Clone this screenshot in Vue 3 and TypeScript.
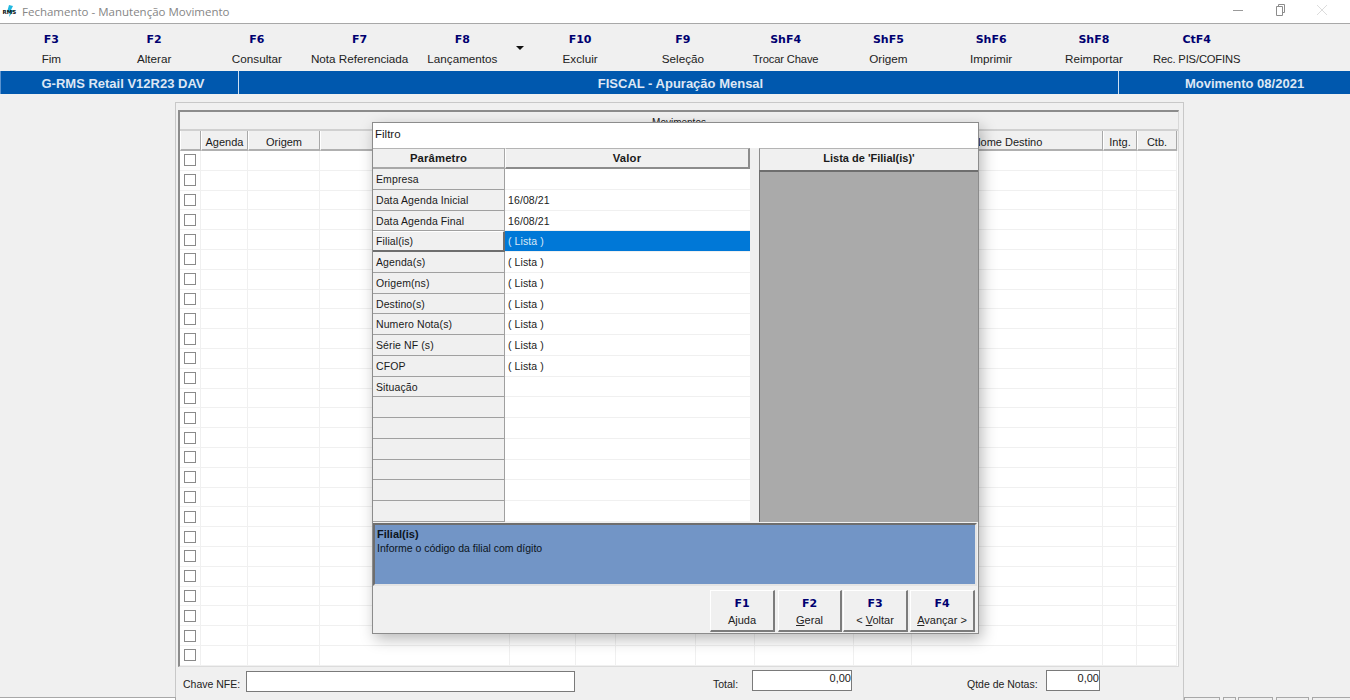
<script setup lang="ts">
interface Tool { key: string; label: string; tight?: boolean }
const toolsLeft: Tool[] = [
  { key: 'F3', label: 'Fim' },
  { key: 'F2', label: 'Alterar' },
  { key: 'F6', label: 'Consultar' },
  { key: 'F7', label: 'Nota Referenciada' },
  { key: 'F8', label: 'Lançamentos' },
]
const toolsRight: Tool[] = [
  { key: 'F10', label: 'Excluir' },
  { key: 'F9', label: 'Seleção' },
  { key: 'ShF4', label: 'Trocar Chave', tight: true },
  { key: 'ShF5', label: 'Origem' },
  { key: 'ShF6', label: 'Imprimir' },
  { key: 'ShF8', label: 'Reimportar' },
  { key: 'CtF4', label: 'Rec. PIS/COFINS', tight: true },
]
const columns = [
  { w: 21, t: '' }, { w: 47, t: 'Agenda' }, { w: 72, t: 'Origem' }, { w: 190, t: '' },
  { w: 66, t: '' }, { w: 40, t: '' }, { w: 80, t: '' }, { w: 59, t: '' }, { w: 99, t: '' },
  { w: 58, t: '' }, { w: 191, t: 'Nome Destino' }, { w: 34, t: 'Intg.' }, { w: 40, t: 'Ctb.' },
]
const rows = Array.from({ length: 26 }, (_, i) => i)
const params = [
  { p: 'Empresa', v: '' },
  { p: 'Data Agenda Inicial', v: '16/08/21' },
  { p: 'Data Agenda Final', v: '16/08/21' },
  { p: 'Filial(is)', v: '( Lista )', active: true },
  { p: 'Agenda(s)', v: '( Lista )' },
  { p: 'Origem(ns)', v: '( Lista )' },
  { p: 'Destino(s)', v: '( Lista )' },
  { p: 'Numero Nota(s)', v: '( Lista )' },
  { p: 'Série NF (s)', v: '( Lista )' },
  { p: 'CFOP', v: '( Lista )' },
  { p: 'Situação', v: '' },
  { p: '', v: '' }, { p: '', v: '' }, { p: '', v: '' },
  { p: '', v: '' }, { p: '', v: '' }, { p: '', v: '' },
]
</script>

<template>
  <div class="app">
    <header class="titlebar">
      <svg class="logo" width="16" height="12" viewBox="0 0 16 12">
        <path d="M7 0 L11 1 L9 5 L12 5 L7 12 L8 7 L5 7 Z" fill="#22b8e0" />
        <text x="0.5" y="8.5" class="logo-text">RMS</text>
      </svg>
      <span class="title">Fechamento - Manutenção Movimento</span>
      <div class="winbtns">
        <svg width="14" height="14" viewBox="0 0 14 14"><path d="M2 7.5H12" stroke="#9a9a9a" /></svg>
        <svg width="14" height="14" viewBox="0 0 14 14"><path d="M5.5 3.5V1.5H11.5V9.5H9.5M3.5 3.5H9.5V12.5H3.5Z" fill="none" stroke="#8c8c8c" /></svg>
        <svg width="14" height="14" viewBox="0 0 14 14"><path d="M2 2L12 12M12 2L2 12" stroke="#dcdcdc" /></svg>
      </div>
    </header>

    <nav class="toolbar">
      <div v-for="t in toolsLeft" :key="t.key" class="tool">
        <b>{{ t.key }}</b><span>{{ t.label }}</span>
      </div>
      <div class="drop"><i class="arrow"></i></div>
      <div v-for="t in toolsRight" :key="t.key" class="tool" :class="{ tight: t.tight }">
        <b>{{ t.key }}</b><span>{{ t.label }}</span>
      </div>
    </nav>

    <div class="banner">
      <div class="bn bn-a">G-RMS Retail V12R23 DAV</div>
      <div class="bn bn-b">FISCAL - Apuração Mensal</div>
      <div class="bn bn-c">Movimento 08/2021</div>
    </div>

    <main class="work">
      <section class="panel">
        <div class="table">
          <div class="tbl-title">Movimentos</div>
          <div class="tr th">
            <div v-for="(c, i) in columns" :key="i" class="hc" :style="{ width: c.w + 'px' }">{{ c.t }}</div>
          </div>
          <div class="tbody">
            <div v-for="r in rows" :key="r" class="tr">
              <div v-for="(c, i) in columns" :key="i" class="td" :style="{ width: c.w + 'px' }">
                <i v-if="i === 0" class="check"></i>
              </div>
            </div>
          </div>
        </div>
        <div class="foot">
          <label class="l1">Chave NFE:</label>
          <div class="inp i1"></div>
          <label class="l2">Total:</label>
          <div class="inp i2">0,00</div>
          <label class="l3">Qtde de Notas:</label>
          <div class="inp i3">0,00</div>
        </div>
      </section>
      <div class="status">
        <i class="s0"></i><i class="s1"></i><i class="s2"></i><i class="s3"></i><i class="s4"></i><i class="s5"></i>
      </div>
    </main>

    <div class="dialog">
      <div class="dlg-title">Filtro</div>
      <div class="dlg-body">
        <div class="grid">
          <div class="grid-head">
            <div class="gh gh-p">Parâmetro</div>
            <div class="gh gh-v">Valor</div>
          </div>
          <div v-for="(r, i) in params" :key="i" class="grow">
            <div class="gp" :class="{ on: r.active }">{{ r.p }}</div>
            <div class="gv" :class="{ on: r.active }">{{ r.v }}</div>
          </div>
        </div>
        <div class="list">
          <div class="list-head">Lista de 'Filial(is)'</div>
          <div class="list-body"></div>
        </div>
      </div>
      <div class="help">
        <b>Filial(is)</b>
        <span>Informe o código da filial com dígito</span>
      </div>
      <div class="actions">
        <button class="btn b1"><b>F1</b><span>Ajuda</span></button>
        <button class="btn b2"><b>F2</b><span><u>G</u>eral</span></button>
        <button class="btn b3"><b>F3</b><span>&lt; <u>V</u>oltar</span></button>
        <button class="btn b4"><b>F4</b><span><u>A</u>vançar &gt;</span></button>
      </div>
    </div>
  </div>
</template>

<style>
html, body { margin: 0; background: #f0f0f0; overflow: hidden; }
</style>

<style scoped>
.app {
  position: relative;
  width: 1350px;
  height: 700px;
  overflow: hidden;
  background: #f0f0f0;
  font-family: "Liberation Sans", Arial, sans-serif;
  font-size: 12px;
  color: #1a1a1a;
  display: flex;
  flex-direction: column;
}
.titlebar {
  height: 23px;
  background: #fff;
  border-bottom: 1px solid #a8a8a8;
  display: flex;
  align-items: center;
  padding-left: 2px;
  flex: none;
}
.logo { margin-right: 4px; margin-top: -1px; }
.logo-text { font-family: "DejaVu Sans", sans-serif; font-weight: 700; font-size: 5.5px; fill: #111; }
.title { color: #868686; font-family: "Open Sans", sans-serif; font-size: 11.5px; margin-top: -1px; }
.winbtns { margin-left: auto; display: flex; gap: 28px; padding-right: 21px; margin-top: -3px; }

.toolbar { height: 47px; display: flex; flex: none; background: #f0f0f0; }
.tool {
  width: 102.75px;
  display: flex;
  flex-direction: column;
  align-items: center;
  padding-top: 9px;
}
.tool b, .btn b {
  font-family: "DejaVu Sans", sans-serif;
  font-size: 11px;
  line-height: 14px;
  color: #000070;
  font-weight: 700;
}
.tool span { font-size: 11.7px; line-height: 14px; margin-top: 5px; color: #222; white-space: nowrap; }
.tool.tight span { font-size: 11.2px; letter-spacing: -.15px; }
.drop { width: 15px; position: relative; }
.arrow {
  position: absolute; left: 0; top: 22px;
  border-left: 4px solid transparent; border-right: 4px solid transparent; border-top: 4px solid #111;
  margin-left: 2px;
}

.banner { height: 23px; display: flex; background: #0058ae; flex: none; color: #dde7f4; font-weight: 700; font-size: 13px; }
.bn { display: flex; align-items: center; justify-content: center; border-right: 1px solid #cfe0f2; box-sizing: border-box; padding-top: 1px; }
.bn-a { width: 239px; padding-left: 7px; border-left: 1px solid #5c93cf; }
.bn-b { width: 880px; padding-left: 4px; }
.bn-c { flex: 1; border-right: 0; padding-left: 20px; }

.work { flex: 1; position: relative; min-height: 0; padding-left: 175px; padding-top: 8px; }
.panel {
  width: 1009px;
  height: 606px;
  box-sizing: border-box;
  background: #f0f0f0;
  border: 1px solid #c8c8c8;
  border-bottom: 0;
  padding: 7px 4px 0 2px;
  position: relative;
}
.table {
  width: 1001px;
  border-top: 2px solid #8c8c8c;
  border-left: 2px solid #8c8c8c;
  border-right: 1px solid #d8d8d8;
  border-bottom: 1px solid #dcdcdc;
  box-sizing: border-box;
  background: #fff;
}
.tbl-title {
  height: 19px;
  box-sizing: border-box;
  background: #f0f0f0;
  border-bottom: 2px solid #d0d0d0;
  text-align: center;
  font-size: 10px;
  line-height: 21px;
}
.tr { display: flex; height: 19.8px; }
.tr .td { flex: none; box-sizing: border-box; border-right: 1px solid #f0f0f0; border-bottom: 1px solid #f0f0f0; display: flex; align-items: center; justify-content: center; }
.tr.th { height: 20px; background: #f0f0f0; }
.hc {
  flex: none;
  box-sizing: border-box;
  border-right: 1px solid #a8a8a8;
  border-bottom: 2px solid #b0b0b0;
  border-left: 1px solid #fff;
  text-align: center;
  font-size: 11px;
  line-height: 20px;
  padding-top: 1px;
  white-space: nowrap;
}
.check { width: 10px; height: 10px; background: #fff; border: 1px solid #8a8a8a; display: block; }

.foot { position: relative; height: 40px; font-size: 10.5px; }
.foot label { position: absolute; top: 10px; line-height: 14px; color: #222; white-space: nowrap; }
.l1 { left: 5px; }
.l2 { left: 535px; }
.l3 { left: 789px; }
.inp {
  position: absolute;
  box-sizing: border-box;
  height: 21px;
  background: #fff;
  border: 1px solid #7a7a7a;
  text-align: right;
  font-size: 11px;
  line-height: 15px;
}
.i1 { left: 68px; width: 329px; top: 4px; }
.i2 { left: 574px; width: 100px; top: 3px; }
.i3 { left: 868px; width: 54px; top: 3px; }

.status { position: absolute; left: 0; right: 0; bottom: 0; height: 3px; }
.status i { position: absolute; top: 0; height: 6px; border: 1px solid #a8a8a8; box-sizing: border-box; }
.s0 { left: -2px; width: 178px; background: #fff; }
.s1 { left: 1184px; width: 36px; }
.s2 { left: 1223px; width: 13px; }
.s3 { left: 1238px; width: 35px; }
.s4 { left: 1276px; width: 33px; }
.s5 { left: 1312px; width: 40px; }

.dialog {
  position: absolute;
  left: 372px;
  top: 122px;
  width: 607px;
  height: 512px;
  box-sizing: border-box;
  background: #f0f0f0;
  border: 1px solid #8c8c8c;
  box-shadow: 3px 5px 14px rgba(0, 0, 0, .28);
  display: flex;
  flex-direction: column;
}
.dlg-title { height: 25px; background: #fff; font-size: 11.5px; line-height: 23px; padding-left: 2px; flex: none; }
.dlg-body { display: flex; height: 374px; flex: none; }
.grid { width: 377px; background: #f0f0f0; }
.grid-head { display: flex; height: 21px; }
.gh {
  box-sizing: border-box;
  text-align: center;
  font-weight: 700;
  font-size: 11.3px;
  line-height: 18px;
  border-bottom: 2px solid #8c8c8c;
  border-right: 1px solid #8c8c8c;
  border-top: 1px solid #b4b4b4;
  letter-spacing: .15px;
}
.gh-p { width: 132px; border-right-color: #a8a8a8; border-bottom-color: #a8a8a8; }
.gh-v { width: 245px; border-left: 1px solid #fff; border-right-width: 2px; }
.grow { display: flex; height: 20.75px; }
.gp {
  width: 132px;
  flex: none;
  box-sizing: border-box;
  background: #f0f0f0;
  font-size: 10.5px;
  line-height: 20px;
  padding-left: 3px;
  border-bottom: 1px solid #a0a0a0;
  border-right: 1px solid #a0a0a0;
  letter-spacing: .1px;
}
.gp.on { border-bottom: 2px solid #6e6e6e; border-right: 2px solid #6e6e6e; border-top: 1px solid #fff; line-height: 18px; }
.gv {
  width: 245px;
  flex: none;
  box-sizing: border-box;
  background: #fff;
  font-size: 10.5px;
  line-height: 20px;
  padding-left: 3px;
  border-bottom: 1px solid #f0f0f0;
  letter-spacing: .1px;
}
.gv.on { background: #0078d7; color: #dbe8f5; }
.list { margin-left: 9px; width: 219px; display: flex; flex-direction: column; }
.list-head {
  height: 22px;
  box-sizing: border-box;
  text-align: center;
  font-weight: 700;
  font-size: 11px;
  line-height: 19px;
  border-left: 1px solid #8c8c8c;
  border-top: 1px solid #b4b4b4;
}
.list-body { flex: 1; background: #aaaaaa; border-top: 2px solid #6e6e6e; border-left: 1px solid #6e6e6e; }
.help {
  height: 63px;
  box-sizing: border-box;
  margin: 1px 1px 0 0;
  flex: none;
  background: #7295c6;
  border: 2px solid #6e6e6e;
  border-right-color: #e4e4e4;
  border-bottom-color: #e4e4e4;
  font-size: 10.5px;
  line-height: 14px;
  padding: 2px 2px;
  display: flex;
  flex-direction: column;
  color: #0c1420;
}
.help b { font-size: 11px; }
.actions { position: relative; flex: 1; }
.btn {
  position: absolute;
  top: 4px;
  height: 42px;
  box-sizing: border-box;
  background: #f0f0f0;
  border: 0;
  border-right: 2px solid #7c7c7c;
  border-bottom: 2px solid #7c7c7c;
  border-top: 1px solid #fff;
  border-left: 1px solid #fff;
  font-family: inherit;
  display: flex;
  flex-direction: column;
  align-items: center;
  padding: 6px 0 0;
  color: #222;
}
.btn span { font-size: 11px; line-height: 14px; margin-top: 2px; white-space: nowrap; }
.b1 { left: 337px; width: 65px; }
.b2 { left: 405px; width: 64px; }
.b3 { left: 470px; width: 65px; }
.b4 { left: 537px; width: 65px; }
</style>
